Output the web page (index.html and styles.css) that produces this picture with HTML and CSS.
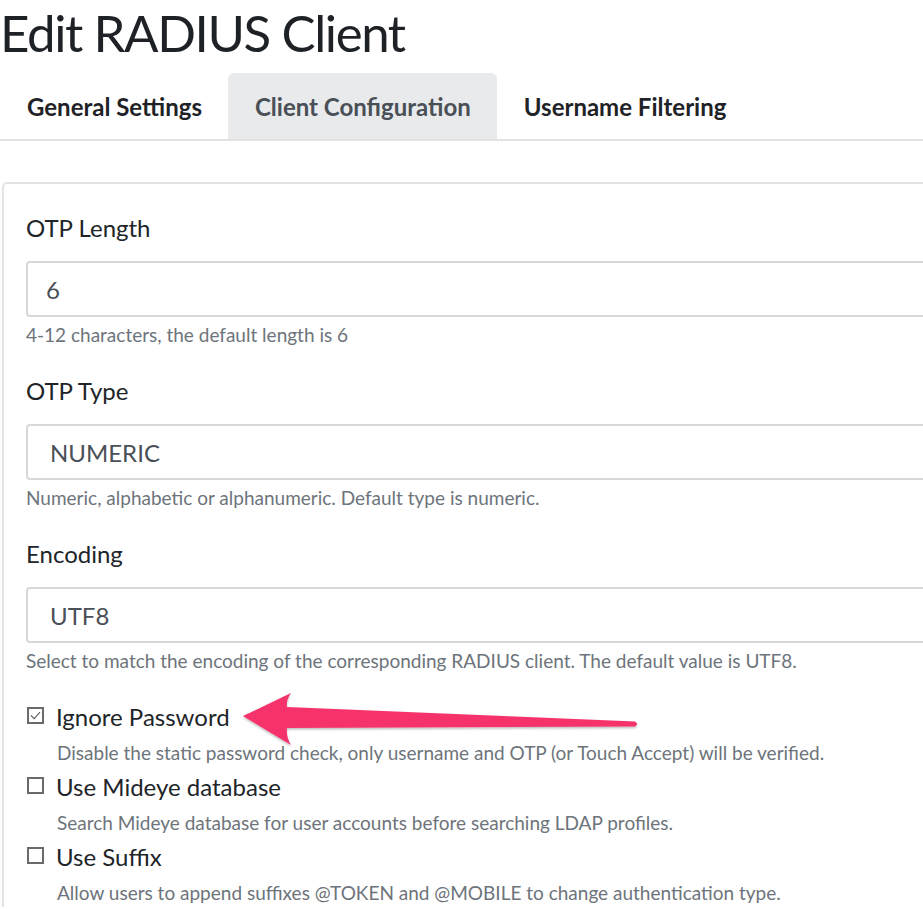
FILE: index.html
```html
<!DOCTYPE html>
<html lang="en">
<head>
<meta charset="utf-8">
<title>Edit RADIUS Client</title>
<link rel="stylesheet" href="styles.css">
</head>
<body>
<div class="page">
  <h1 class="title">Edit RADIUS Client</h1>
  <nav class="tabs">
    <a class="tab">General Settings</a>
    <a class="tab active">Client Configuration</a>
    <a class="tab">Username Filtering</a>
  </nav>
  <div class="panel">
    <div class="group">
      <label class="label">OTP Length</label>
      <div class="input">6</div>
      <div class="help">4-12 characters, the default length is 6</div>
    </div>
    <div class="group">
      <label class="label">OTP Type</label>
      <div class="input select">NUMERIC</div>
      <div class="help">Numeric, alphabetic or alphanumeric. Default type is numeric.</div>
    </div>
    <div class="group">
      <label class="label">Encoding</label>
      <div class="input select">UTF8</div>
      <div class="help">Select to match the encoding of the corresponding RADIUS client. The default value is UTF8.</div>
    </div>
    <div class="check">
      <div class="check-row">
        <span class="box"><svg viewBox="0 0 17 17" width="17" height="17"><path d="M4 8.5 L7.2 11.6 L13 5.2" fill="none" stroke="#666" stroke-width="1.2"/></svg></span>
        <span class="check-label">Ignore Password</span>
      </div>
      <div class="check-help">Disable the static password check, only username and OTP (or Touch Accept) will be verified.</div>
    </div>
    <div class="check">
      <div class="check-row">
        <span class="box"></span>
        <span class="check-label">Use Mideye database</span>
      </div>
      <div class="check-help">Search Mideye database for user accounts before searching LDAP profiles.</div>
    </div>
    <div class="check">
      <div class="check-row">
        <span class="box"></span>
        <span class="check-label">Use Suffix</span>
      </div>
      <div class="check-help">Allow users to append suffixes @TOKEN and @MOBILE to change authentication type.</div>
    </div>
  </div>
  <svg class="arrow" width="923" height="909" viewBox="0 0 923 909">
    <defs>
      <filter id="sh" x="-10%" y="-50%" width="120%" height="200%">
        <feDropShadow dx="0" dy="1.5" stdDeviation="1.2" flood-color="#000" flood-opacity="0.28"/>
      </filter>
    </defs>
    <path d="M243 716 L291 693 Q286 700 287 707 L635 721.5 Q639 724 635 726.5 L287 728 Q286 737 291 745 Z" fill="#f5336b" filter="url(#sh)"/>
  </svg>
</div>
</body>
</html>
```
FILE: styles.css
```css
html, body {
  margin: 0;
  padding: 0;
  background: #fff;
  overflow: hidden;
}
body {
  font-family: Lato, "Open Sans", sans-serif;
  color: #212529;
}
.page {
  position: relative;
  width: 1010px;
  height: 909px;
}
.title {
  margin: 0 0 7px 0;
  font-size: 51px;
  font-weight: 400;
  line-height: 66px;
  letter-spacing: -1.4px;
  color: #1e2226;
}
.tabs {
  display: flex;
  border-bottom: 2px solid #e1e3e5;
}
.tab {
  display: flex;
  align-items: center;
  height: 66px;
  padding: 0 26px 0 27px;
  font-size: 24px;
  font-weight: 700;
  color: #1f2327;
  border-radius: 6px 6px 0 0;
}
.tab.active {
  background: #e9eaec;
  color: #4a5057;
}
.panel {
  margin: 41px 0 0 2px;
  border: 2px solid #e4e4e4;
  border-right: none;
  border-bottom: none;
  border-radius: 5px 0 0 0;
  padding: 27px 0 0 22px;
}
.group {
  margin-bottom: 25px;
}
.label {
  display: block;
  font-size: 24px;
  line-height: 34px;
  margin-bottom: 16px;
  color: #212529;
}
.input {
  height: 52px;
  border: 2px solid #d7d8da;
  border-radius: 4px;
  padding: 0 0 0 18px;
  display: flex;
  align-items: center;
  font-size: 24px;
  color: #4a5057;
}
.input.select {
  padding-left: 22px;
}
.help {
  margin-top: 4px;
  font-size: 19px;
  line-height: 28px;
  color: #6d747b;
}
.check {
  margin-bottom: 3px;
}
.check-row {
  display: flex;
  align-items: center;
  height: 34px;
  gap: 12px;
}
.box {
  width: 17px;
  height: 17px;
  box-sizing: border-box;
  border: 2px solid #6a6a6a;
  display: flex;
  align-items: center;
  justify-content: center;
  margin-left: 1px;
  margin-top: -3px;
}
.box svg {
  flex: none;
}
.check-label {
  font-size: 24px;
  line-height: 34px;
  color: #212529;
}
.check-help {
  margin: 5px 0 0 31px;
  font-size: 19px;
  line-height: 28px;
  color: #6d747b;
}
.arrow {
  position: absolute;
  left: 0;
  top: 0;
  pointer-events: none;
}
```
